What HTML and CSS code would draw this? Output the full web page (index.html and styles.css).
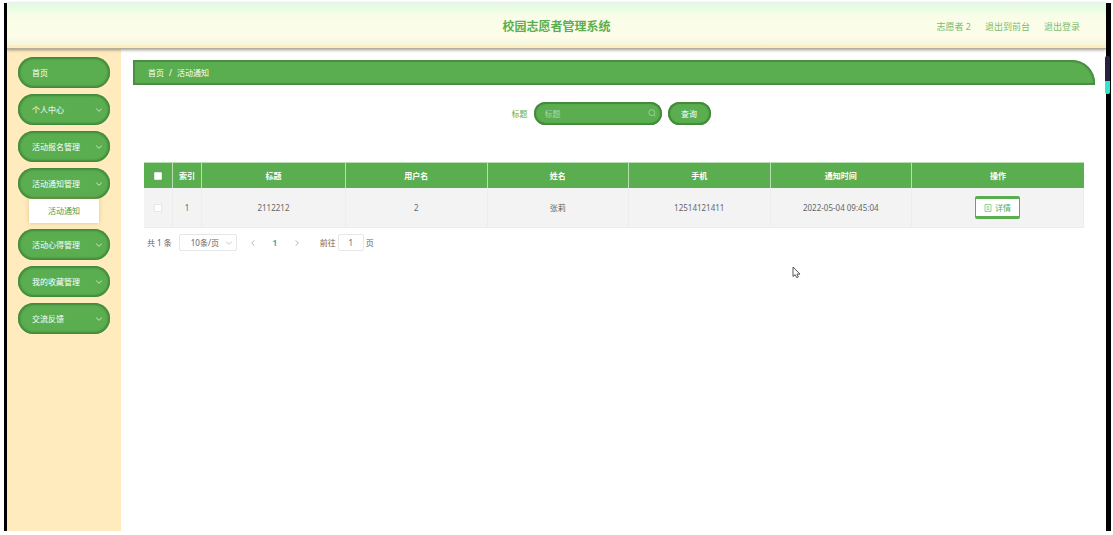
FILE: index.html
```html
<!DOCTYPE html>
<html lang="zh-CN">
<head>
<meta charset="utf-8">
<title>校园志愿者管理系统</title>
<link rel="stylesheet" href="styles.css">
</head>
<body>
<svg class="defs" width="0" height="0" aria-hidden="true">
  <symbol id="down" viewBox="0 0 8 8"><path d="M1.2 2.7 4 5.3 6.8 2.7" fill="none" stroke="currentColor" stroke-width=".9"/></symbol>
  <symbol id="left" viewBox="0 0 8 8"><path d="M5.3 1.4 2.7 4 5.3 6.6" fill="none" stroke="currentColor" stroke-width=".9"/></symbol>
  <symbol id="right" viewBox="0 0 8 8"><path d="M2.7 1.4 5.3 4 2.7 6.6" fill="none" stroke="currentColor" stroke-width=".9"/></symbol>
</svg>
<div class="app">
  <header class="topbar">
    <h1 class="title">校园志愿者管理系统</h1>
    <nav class="user-links">
      <span>志愿者 2</span>
      <a href="#">退出到前台</a>
      <a href="#">退出登录</a>
    </nav>
  </header>
  <div class="body">
    <nav class="sidebar">
      <button class="menu-item">首页</button>
      <button class="menu-item">个人中心<svg class="icon"><use href="#down"/></svg></button>
      <button class="menu-item">活动报名管理<svg class="icon"><use href="#down"/></svg></button>
      <div class="menu-group">
        <button class="menu-item">活动通知管理<svg class="icon"><use href="#down"/></svg></button>
        <a class="submenu" href="#">活动通知</a>
      </div>
      <button class="menu-item">活动心得管理<svg class="icon"><use href="#down"/></svg></button>
      <button class="menu-item">我的收藏管理<svg class="icon"><use href="#down"/></svg></button>
      <button class="menu-item">交流反馈<svg class="icon"><use href="#down"/></svg></button>
    </nav>
    <main class="main">
      <nav class="breadcrumb"><a href="#">首页</a><span>/</span><span>活动通知</span></nav>
      <section class="content">
        <form class="search">
          <label for="keyword">标题</label>
          <div class="search-box">
            <input id="keyword" type="text" placeholder="标题">
            <svg class="lens" viewBox="0 0 8 8"><circle cx="3.8" cy="3.6" r="3" fill="none" stroke="currentColor" stroke-width=".8"/><path d="M6 5.8 7.5 7.4" stroke="currentColor" stroke-width=".8"/></svg>
          </div>
          <button class="query" type="button">查询</button>
        </form>
        <table class="grid">
          <colgroup><col class="c-check"><col class="c-index"><col class="c-title"><col><col><col><col><col class="c-action"></colgroup>
          <thead>
            <tr><th><input class="check" type="checkbox" aria-label="全选"></th><th>索引</th><th>标题</th><th>用户名</th><th>姓名</th><th>手机</th><th>通知时间</th><th>操作</th></tr>
          </thead>
          <tbody>
            <tr><td><input class="check" type="checkbox" aria-label="选择第1行"></td><td>1</td><td>2112212</td><td>2</td><td>张莉</td><td>12514121411</td><td>2022-05-04 09:45:04</td>
              <td><button class="detail"><svg class="icon" viewBox="0 0 8 8"><path d="M1 .5h6v7H1zM2.5 2.5h2M2.5 4h3M2.5 5.7h3" fill="none" stroke="currentColor" stroke-width=".6"/></svg>详情</button></td></tr>
          </tbody>
        </table>
        <div class="pager">
          <span>共 1 条</span>
          <div class="size">
            <select aria-label="每页条数"><option>10条/页</option></select>
            <svg class="icon size-arrow"><use href="#down"/></svg>
          </div>
          <div class="pages">
            <button aria-label="上一页"><svg class="icon"><use href="#left"/></svg></button>
            <button class="current">1</button>
            <button aria-label="下一页"><svg class="icon"><use href="#right"/></svg></button>
          </div>
          <div class="jump"><label for="page">前往</label><input id="page" type="text" value="1"><span>页</span></div>
        </div>
      </section>
    </main>
  </div>
</div>
<div class="float-widget"></div>
<svg class="cursor" viewBox="0 0 9 13"><path d="M1 1v9.5l2.2-1.8 1.5 3 1.6-.8-1.3-2.8H8z" fill="#fff" stroke="#444" stroke-width=".9"/></svg>
</body>
</html>
```
FILE: styles.css
```css
* { box-sizing: border-box; }
body {
  margin: 0;
  padding: 3px 2px 4px 4px;
  min-height: 100vh;
  display: flex;
  background: #fff;
  color: #666;
  font: 8px/12px "Noto Sans", "Noto Sans CJK SC", sans-serif;
}
button, input, select { font: inherit; color: inherit; margin: 0; padding: 0; border: 0; background: none; }
a { color: inherit; text-decoration: none; }
.defs { position: absolute; }
.icon { width: 8px; height: 8px; flex: none; }

.app {
  flex: 1;
  min-width: 0;
  display: flex;
  flex-direction: column;
  border-left: 3px solid #000;
  border-right: 5px solid #000;
}
.topbar {
  display: grid;
  grid-template-columns: 1fr auto 1fr;
  align-items: center;
  height: 46px;
  padding: 2px 26px 0;
  border-bottom: 1px solid #b5ad9c;
  background: linear-gradient(#dffbe0, #f9fde8 30%, #fdfde8 75%, #f6f5df 92%, #fdeebc 94%);
  box-shadow: 0 1px 3px #0006;
  z-index: 1;
}
.title { grid-column: 2; margin: 0; font-size: 12px; line-height: 18px; font-weight: 700; color: #5aae50; }
.user-links { justify-self: end; display: flex; gap: 14px; font-size: 9px; color: #7dbb72; }
.body { flex: 1; display: flex; }

.sidebar {
  width: 114px;
  padding: 8px 11px;
  display: flex;
  flex-direction: column;
  gap: 6px;
  background: #ffebbd;
}
.menu-item {
  display: flex;
  align-items: center;
  justify-content: space-between;
  width: 92px;
  height: 31px;
  padding: 0 7px 0 14px;
  border-radius: 16px;
  background: #5aae50;
  box-shadow: inset 0 0 2px 2px #438a3b;
  color: #fff;
}
.menu-item .icon { color: #d7edd3; }
.submenu {
  display: block;
  margin: 0 11px;
  line-height: 24px;
  text-align: center;
  background: #fff;
  color: #4d9a46;
  box-shadow: 0 0 4px #c9a96a99;
}

.main { flex: 1; min-width: 0; padding: 11px 11px 0 12px; }
.breadcrumb {
  display: flex;
  align-items: center;
  gap: 5px;
  height: 25px;
  padding-left: 15px;
  border-radius: 0 23px 0 0;
  background: #5aae50;
  box-shadow: inset 0 0 1px 2px #4a8d42;
  color: #fff;
}
.content { padding: 17px 11px 0 11px; }
.search { display: flex; justify-content: center; align-items: center; gap: 6px; padding-right: 6px; color: #5aae50; }
.search-box { position: relative; display: flex; }
.search-box input {
  width: 128px;
  height: 23px;
  padding: 0 20px 0 11px;
  border-radius: 12px;
  background: #5aae50;
  box-shadow: inset 0 0 1px 2px #438a3b;
  color: #fff;
}
.search-box input::placeholder { color: #a9d6b4; opacity: 1; }
.lens { position: absolute; right: 6px; top: 7px; width: 8px; height: 8px; color: #a9d6b4; }
.query {
  width: 43px;
  height: 23px;
  border-radius: 12px;
  background: #5aae50;
  box-shadow: inset 0 0 1px 2px #438a3b;
  color: #fff;
}

.grid { width: 100%; margin-top: 37px; table-layout: fixed; border-collapse: separate; border-spacing: 0; text-align: center; border-top: 1px solid #b8dfb2; }
.c-check { width: 29px; }
.c-index { width: 29px; }
.c-title { width: 144px; }
.c-action { width: 172px; }
.grid th { height: 25px; padding: 0; background: #5aae50; color: #fff; font-weight: 700; border-right: 1px solid #b8dfb2; }
.grid td { height: 40px; padding: 0; background: #f3f3f3; border-right: 1px solid #ebedf3; border-bottom: 1px solid #ebedf3; }
.grid th:last-child { border-right: 0; }
.check { appearance: none; display: block; width: 8px; height: 8px; margin: 0 auto; border: 1px solid #e4e6ea; border-radius: 1px; background: #fff; }
.detail {
  display: inline-flex;
  align-items: center;
  justify-content: center;
  gap: 3px;
  width: 45px;
  height: 23px;
  border: 1px solid #5aae50;
  border-width: 3px 1px;
  border-radius: 2px;
  background: #fff;
  color: #5aae50;
}

.pager { display: flex; align-items: center; margin-top: 6px; padding-left: 3px; }
.size { position: relative; display: flex; margin-left: 7px; }
.size select { appearance: none; width: 58px; height: 17px; padding-left: 11px; border: 1px solid #e4e6ea; border-radius: 2px; background: #fff; }
.size-arrow { position: absolute; right: 4px; top: 5px; color: #c0c4cc; }
.pages { display: flex; margin-left: 5px; }
.pages button { display: flex; align-items: center; justify-content: center; width: 22px; height: 17px; color: #aaa; }
.pages .current { color: #2bb8a3; font-weight: 700; }
.jump { display: flex; align-items: center; gap: 2px; margin-left: 12px; }
.jump input { width: 26px; height: 17px; border: 1px solid #e4e6ea; border-radius: 2px; text-align: center; }

.float-widget {
  position: absolute;
  top: 56px;
  right: 3px;
  width: 5px;
  height: 38px;
  border-radius: 2px;
  background: linear-gradient(#25213f 66%, #2fe6cf 66%);
  z-index: 2;
}
.cursor { position: absolute; left: 792px; top: 266px; width: 9px; height: 13px; }
```
